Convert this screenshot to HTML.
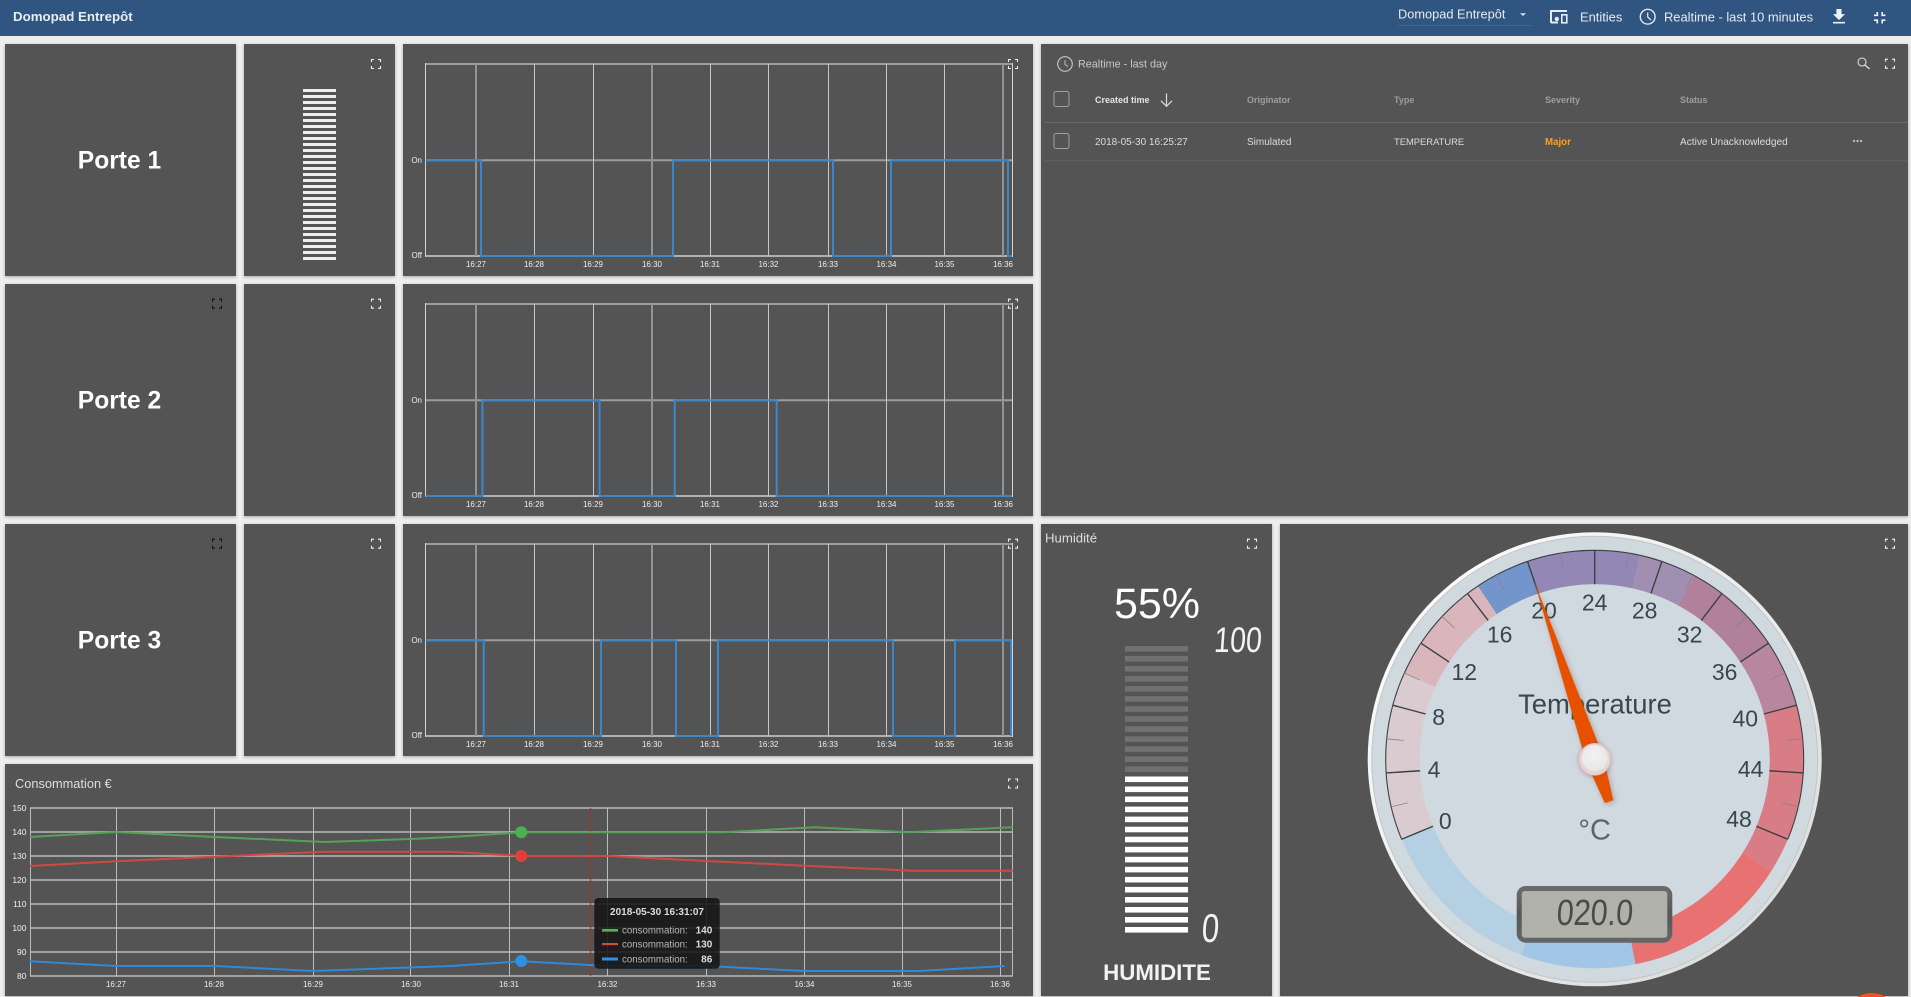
<!DOCTYPE html>
<html lang="fr">
<head>
<meta charset="utf-8">
<title>Domopad Entrepôt</title>
<style>
html,body{margin:0;padding:0;width:1911px;height:997px;overflow:hidden;background:#eeeeee;font-family:"Liberation Sans",sans-serif}
.hd{position:absolute;left:0;top:0;width:1911px;height:36px;background:#2f5580}
.c{position:absolute;background:#535453;box-shadow:0 1px 3px rgba(0,0,0,.3)}
svg{position:absolute;left:0;top:0;display:block;overflow:hidden}
text{font-family:"Liberation Sans",sans-serif}
</style>
</head>
<body>
<div class="hd"></div>
<div class="c" style="left:5px;top:44px;width:231px;height:232px"></div>
<div class="c" style="left:244px;top:44px;width:151px;height:232px"></div>
<div class="c" style="left:403px;top:44px;width:630px;height:232px"></div>
<div class="c" style="left:5px;top:284px;width:231px;height:232px"></div>
<div class="c" style="left:244px;top:284px;width:151px;height:232px"></div>
<div class="c" style="left:403px;top:284px;width:630px;height:232px"></div>
<div class="c" style="left:5px;top:524px;width:231px;height:232px"></div>
<div class="c" style="left:244px;top:524px;width:151px;height:232px"></div>
<div class="c" style="left:403px;top:524px;width:630px;height:232px"></div>
<div class="c" style="left:5px;top:764px;width:1028px;height:232px"></div>
<div class="c" style="left:1041px;top:44px;width:867px;height:472px"></div>
<div class="c" style="left:1041px;top:524px;width:231px;height:472px"></div>
<div class="c" style="left:1280px;top:524px;width:628px;height:472px"></div>

<svg width="1911" height="997" viewBox="0 0 1911 997" xmlns="http://www.w3.org/2000/svg">
<defs>
<path id="ex" d="M-4.5 -2V-4.5H-2M2 -4.5H4.5V-2M4.5 2V4.5H2M-2 4.5H-4.5V2" fill="none" stroke-width="1.1"/>
<g id="grid" fill="none">
<path d="M425 64H1012M425 160.3H1012" stroke="#9c9c9c" stroke-width="2"/>
<path d="M425 256H1012" stroke="#b0b0b0" stroke-width="2"/>
<path d="M425.5 63V257M1012.5 63V257" stroke="#d4d4d4"/>
<path d="M476 64V256M652 64V256M1003 64V256" stroke="#939393" stroke-width="2"/>
<path d="M534.5 64V256M593.5 64V256M710.5 64V256M768.5 64V256M828.5 64V256M886.5 64V256M944.5 64V256" stroke="#c6c6c6"/>
</g>
<g id="bars" fill="#eeeeee" shape-rendering="crispEdges">
<rect x="0" y="0" width="33" height="3"/><rect x="0" y="6" width="33" height="3"/><rect x="0" y="12" width="33" height="3"/><rect x="0" y="18" width="33" height="3"/><rect x="0" y="24" width="33" height="3"/><rect x="0" y="30" width="33" height="3"/><rect x="0" y="36" width="33" height="3"/><rect x="0" y="42" width="33" height="3"/><rect x="0" y="48" width="33" height="3"/><rect x="0" y="54" width="33" height="3"/><rect x="0" y="60" width="33" height="3"/><rect x="0" y="66" width="33" height="3"/><rect x="0" y="72" width="33" height="3"/><rect x="0" y="78" width="33" height="3"/><rect x="0" y="84" width="33" height="3"/><rect x="0" y="90" width="33" height="3"/><rect x="0" y="96" width="33" height="3"/><rect x="0" y="102" width="33" height="3"/><rect x="0" y="108" width="33" height="3"/><rect x="0" y="114" width="33" height="3"/><rect x="0" y="120" width="33" height="3"/><rect x="0" y="126" width="33" height="3"/><rect x="0" y="132" width="33" height="3"/><rect x="0" y="138" width="33" height="3"/><rect x="0" y="144" width="33" height="3"/><rect x="0" y="150" width="33" height="3"/><rect x="0" y="156" width="33" height="3"/><rect x="0" y="162" width="33" height="3"/><rect x="0" y="168" width="33" height="3"/>
</g>
<linearGradient id="lcdb" x1="0" y1="0" x2="0" y2="1"><stop offset="0" stop-color="#6b6b6b"/><stop offset=".5" stop-color="#575757"/><stop offset="1" stop-color="#666"/></linearGradient>
<linearGradient id="rim" x1="0" y1="0" x2="1" y2="1"><stop offset="0" stop-color="#ffffff"/><stop offset="1" stop-color="#d8d8d8"/></linearGradient>
<radialGradient id="hub" cx=".45" cy=".4" r=".65"><stop offset="0" stop-color="#f2f2f2"/><stop offset="1" stop-color="#e6e6e6"/></radialGradient>
</defs>

<!-- HEADER -->
<text x="13" y="21" font-size="13.3" font-weight="700" fill="#e9eef3">Domopad Entrepôt</text>
<text x="1398" y="18.5" font-size="12.8" fill="#e6ebf1">Domopad Entrepôt</text>
<path d="M1398 25.5H1532" stroke="#41648c"/>
<path d="M1520 13.2L1526 13.2L1523 16Z" fill="#dfe5ec"/>
<path d="M1551 23V11H1567" fill="none" stroke="#e6ebf1" stroke-width="2"/>
<path d="M1551 22.5H1558" fill="none" stroke="#e6ebf1" stroke-width="2"/>
<rect x="1561.8" y="14.8" width="5" height="8" fill="none" stroke="#e6ebf1" stroke-width="1.6"/>
<circle cx="1556.8" cy="19" r="2.2" fill="#e6ebf1"/>
<text x="1580" y="21.5" font-size="12.9" fill="#e6ebf1">Entities</text>
<circle cx="1647.7" cy="16.7" r="7.4" fill="none" stroke="#e6ebf1" stroke-width="1.4"/>
<path d="M1647.7 12.5V17L1651 20" fill="none" stroke="#e6ebf1" stroke-width="1.2"/>
<text x="1664" y="21.5" font-size="12.9" fill="#e6ebf1">Realtime - last 10 minutes</text>
<g transform="translate(1828.7 6.4) scale(.857)"><path d="M19 9h-4V3H9v6H5l7 7 7-7zM5 18v2h14v-2H5z" fill="#eef1f5"/></g>
<g transform="translate(1869.9 7.9) scale(.82)"><path d="M5 16h3v3h2v-5H5v2zm3-8H5v2h5V5H8v3zm6 11h2v-3h3v-2h-5v5zm2-11V5h-2v5h5V8h-3z" fill="#eef1f5"/></g>

<!-- PORTE titles -->
<text x="119.5" y="168.5" font-size="24.6" font-weight="700" fill="#ffffff" text-anchor="middle">Porte 1</text>
<text x="119.5" y="408.5" font-size="24.6" font-weight="700" fill="#ffffff" text-anchor="middle">Porte 2</text>
<text x="119.5" y="648.5" font-size="24.6" font-weight="700" fill="#ffffff" text-anchor="middle">Porte 3</text>
<use href="#ex" x="217" y="303.7" stroke="#111"/>
<use href="#ex" x="217" y="543.7" stroke="#111"/>

<!-- bar card 1 -->
<use href="#bars" x="303" y="89"/>
<use href="#ex" x="376" y="64" stroke="#eee"/>
<use href="#ex" x="376" y="303.7" stroke="#eee"/>
<use href="#ex" x="376" y="543.7" stroke="#eee"/>

<!-- CHARTS -->
<use href="#grid"/>
<use href="#grid" y="240"/>
<use href="#grid" y="480"/>

<path d="M425.5 160.3H481V256H673V160.3H833V256H891V160.3H1008V256H1012" fill="none" stroke="#3b87c9" stroke-width="2"/>
<path d="M425.5 496H482.4V400.3H599.6V496H674.7V400.3H776.7V496H1012" fill="none" stroke="#3b87c9" stroke-width="2"/>
<path d="M425.5 640.3H483.7V736H601V640.3H676V736H718V640.3H893V736H955V640.3H1011V736" fill="none" stroke="#3b87c9" stroke-width="2"/>

<g font-size="8" fill="#eeeeee" text-anchor="middle">
<text x="476" y="267">16:27</text><text x="534" y="267">16:28</text><text x="593" y="267">16:29</text><text x="652" y="267">16:30</text><text x="710" y="267">16:31</text><text x="768.5" y="267">16:32</text><text x="828" y="267">16:33</text><text x="886.5" y="267">16:34</text><text x="944.5" y="267">16:35</text><text x="1003" y="267">16:36</text>
<text x="476" y="507">16:27</text><text x="534" y="507">16:28</text><text x="593" y="507">16:29</text><text x="652" y="507">16:30</text><text x="710" y="507">16:31</text><text x="768.5" y="507">16:32</text><text x="828" y="507">16:33</text><text x="886.5" y="507">16:34</text><text x="944.5" y="507">16:35</text><text x="1003" y="507">16:36</text>
<text x="476" y="747">16:27</text><text x="534" y="747">16:28</text><text x="593" y="747">16:29</text><text x="652" y="747">16:30</text><text x="710" y="747">16:31</text><text x="768.5" y="747">16:32</text><text x="828" y="747">16:33</text><text x="886.5" y="747">16:34</text><text x="944.5" y="747">16:35</text><text x="1003" y="747">16:36</text>
</g>
<g font-size="8" fill="#eeeeee" text-anchor="end">
<text x="422" y="163">On</text><text x="422" y="258">Off</text>
<text x="422" y="403">On</text><text x="422" y="498">Off</text>
<text x="422" y="643">On</text><text x="422" y="738">Off</text>
</g>
<use href="#ex" x="1013" y="64" stroke="#eee"/>
<use href="#ex" x="1013" y="303.7" stroke="#eee"/>
<use href="#ex" x="1013" y="543.7" stroke="#eee"/>

<!-- CONSUMPTION -->
<text x="15" y="788" font-size="12.8" fill="#dddddd">Consommation €</text>
<use href="#ex" x="1013" y="783.5" stroke="#eee"/>
<path d="M30 808H1013M30 832H1013M30 856H1013M30 880H1013M30 904H1013M30 928H1013M30 952H1013M30 976H1013" stroke="#a0a0a0" stroke-width="2" fill="none"/>
<path d="M30.5 808V976M1012.5 808V976M116.5 808V976M214.5 808V976M313.5 808V976M410.5 808V976M509.5 808V976M607.5 808V976M706.5 808V976M804.5 808V976M902.5 808V976M1000.5 808V976" stroke="#bcbcbc" fill="none"/>
<path d="M590.5 808V976" stroke="#8e3a38" stroke-width="1.4" fill="none"/>
<polyline points="29.8,837 116,832 214.2,837 325,842 410.6,839 451,837 521.3,832.3 723,832.3 814.5,827.3 908.7,832.3 1012.8,827.3" fill="none" stroke="#55a159" stroke-width="2"/>
<polyline points="29.8,866 116,861.3 214.2,856.7 325,851.7 451,851.7 521.3,856 610.2,856 706.4,861 804.5,865.7 912,870.7 1012.8,870.7" fill="none" stroke="#cf4a44" stroke-width="2"/>
<polyline points="29.8,961.3 116,966 215.6,966 313,971 451,966 521.3,961.3 607.5,966 706.4,966 804.5,971 918.6,971 1004.8,966" fill="none" stroke="#2f8ad8" stroke-width="2"/>
<circle cx="521.3" cy="832.3" r="6" fill="#4caf50"/>
<circle cx="521.3" cy="856" r="6" fill="#e0403a"/>
<circle cx="521.3" cy="961" r="6" fill="#2f8fe0"/>
<g font-size="8" fill="#eeeeee" text-anchor="middle">
<text x="116" y="987">16:27</text><text x="214" y="987">16:28</text><text x="313" y="987">16:29</text><text x="411" y="987">16:30</text><text x="509" y="987">16:31</text><text x="607.5" y="987">16:32</text><text x="706" y="987">16:33</text><text x="804.5" y="987">16:34</text><text x="902" y="987">16:35</text><text x="1000" y="987">16:36</text>
</g>
<g font-size="8.5" fill="#eeeeee" text-anchor="end">
<text x="26.5" y="811">150</text><text x="26.5" y="835">140</text><text x="26.5" y="859">130</text><text x="26.5" y="883">120</text><text x="26.5" y="907">110</text><text x="26.5" y="931">100</text><text x="26.5" y="955">90</text><text x="26.5" y="979">80</text>
</g>
<rect x="594.3" y="898" width="125.4" height="70.7" rx="4" fill="#141414" fill-opacity=".88"/>
<text x="657" y="915" font-size="10" font-weight="700" fill="#dddddd" text-anchor="middle">2018-05-30 16:31:07</text>
<rect x="602" y="929" width="16" height="2.6" fill="#55b15a"/>
<rect x="602" y="943" width="16" height="2.2" fill="#d5483f"/>
<rect x="602" y="957.5" width="16" height="3" fill="#2f90e0"/>
<g font-size="9.7" fill="#b8b8b8">
<text x="622" y="933.5">consommation:</text><text x="622" y="947.5">consommation:</text><text x="622" y="962.5">consommation:</text>
</g>
<g font-size="10" font-weight="700" fill="#dddddd" text-anchor="end">
<text x="712.3" y="933.5">140</text><text x="712.3" y="947.5">130</text><text x="712.3" y="962.5">86</text>
</g>

<!-- ALARM TABLE -->
<circle cx="1065" cy="64" r="7.3" fill="none" stroke="#c8c8c8" stroke-width="1.1"/>
<path d="M1065 60V64.5L1068 66.5" fill="none" stroke="#c8c8c8" stroke-width=".9"/>
<text x="1078" y="67.7" font-size="10.8" fill="#c8c8c8">Realtime - last day</text>
<circle cx="1862" cy="62" r="4" fill="none" stroke="#dddddd" stroke-width="1.1"/>
<path d="M1865 65L1869.5 69" stroke="#dddddd" stroke-width="1.3"/>
<use href="#ex" x="1890" y="63.7" stroke="#eee"/>
<rect x="1054" y="91.5" width="15" height="15" rx="2" fill="none" stroke="#a0a0a0"/>
<rect x="1054" y="133.5" width="15" height="15" rx="2" fill="none" stroke="#a0a0a0"/>
<text x="1095" y="103" font-size="9" font-weight="700" fill="#e4e4e4">Created time</text>
<path d="M1166.5 93.5V106M1161 100.8L1166.5 106.3L1172 100.8" fill="none" stroke="#dddddd" stroke-width="1.2"/>
<g font-size="9" font-weight="700" fill="#9e9e9e">
<text x="1247" y="103">Originator</text><text x="1394" y="103">Type</text><text x="1545" y="103">Severity</text><text x="1680" y="103">Status</text>
</g>
<path d="M1044 122.5H1908" stroke="#696969"/>
<path d="M1044 160.5H1908" stroke="#5e5e5e"/>
<g font-size="10" fill="#dcdcdc">
<text x="1095" y="145">2018-05-30 16:25:27</text>
<text x="1247" y="145">Simulated</text>
<text x="1394" y="145" font-size="9.4">TEMPERATURE</text>
<text x="1680" y="145" font-size="10.1">Active Unacknowledged</text>
</g>
<text x="1545" y="145" font-size="9.7" font-weight="700" fill="#f9a02a">Major</text>
<circle cx="1854" cy="141" r="1.2" fill="#b8b8b8"/><circle cx="1857.5" cy="141" r="1.2" fill="#b8b8b8"/><circle cx="1861" cy="141" r="1.2" fill="#b8b8b8"/>

<!-- HUMIDITY -->
<text x="1045" y="542.5" font-size="13.2" fill="#dddddd">Humidité</text>
<use href="#ex" x="1252" y="543.7" stroke="#eee"/>
<text x="1157" y="618" font-size="43" fill="#ffffff" text-anchor="middle">55%</text>
<g fill="#717171">
<rect x="1125" y="646" width="63" height="5.6"/><rect x="1125" y="656" width="63" height="5.6"/><rect x="1125" y="666" width="63" height="5.6"/><rect x="1125" y="676" width="63" height="5.6"/><rect x="1125" y="686.1" width="63" height="5.6"/><rect x="1125" y="696.1" width="63" height="5.6"/><rect x="1125" y="706.2" width="63" height="5.6"/><rect x="1125" y="716.2" width="63" height="5.6"/><rect x="1125" y="726.3" width="63" height="5.6"/><rect x="1125" y="736.3" width="63" height="5.6"/><rect x="1125" y="746.3" width="63" height="5.6"/><rect x="1125" y="756.4" width="63" height="5.6"/><rect x="1125" y="766.4" width="63" height="5.6"/>
</g>
<g fill="#ffffff">
<rect x="1125" y="776.5" width="63" height="5.6"/><rect x="1125" y="786.5" width="63" height="5.6"/><rect x="1125" y="796.5" width="63" height="5.6"/><rect x="1125" y="806.6" width="63" height="5.6"/><rect x="1125" y="816.6" width="63" height="5.6"/><rect x="1125" y="826.7" width="63" height="5.6"/><rect x="1125" y="836.7" width="63" height="5.6"/><rect x="1125" y="846.8" width="63" height="5.6"/><rect x="1125" y="856.8" width="63" height="5.6"/><rect x="1125" y="866.8" width="63" height="5.6"/><rect x="1125" y="876.9" width="63" height="5.6"/><rect x="1125" y="886.9" width="63" height="5.6"/><rect x="1125" y="897" width="63" height="5.6"/><rect x="1125" y="907" width="63" height="5.6"/><rect x="1125" y="917" width="63" height="5.6"/><rect x="1125" y="927" width="63" height="5.6"/>
</g>
<text transform="translate(1213.5 652) skewX(-4) scale(1 1.25)" font-size="28.5" fill="#f4f4f4">100</text>
<text transform="translate(1201 942) skewX(-4) scale(1 1.3)" font-size="31" fill="#f4f4f4">0</text>
<text x="1157" y="980" font-size="22.3" font-weight="700" fill="#f2f2f2" text-anchor="middle">HUMIDITE</text>

<!-- GAUGE -->
<use href="#ex" x="1890" y="543.7" stroke="#eee"/>
<g transform="translate(1594.7 759.3)">
<circle r="227" fill="url(#rim)"/>
<circle r="223.5" fill="#bfc6ca"/>
<circle r="222.5" fill="#d0d9dd"/>
<g fill="none" stroke-width="34">
<circle r="192" pathLength="360" stroke-dasharray="46.9 360" stroke="#d9cbd0" transform="rotate(-202.5)"/>
<circle r="192" pathLength="360" stroke-dasharray="31.6 360" stroke="#d9b6bb" transform="rotate(-155.6)"/>
<circle r="192" pathLength="360" stroke-dasharray="15.25 360" stroke="#7494cc" transform="rotate(-124)"/>
<circle r="192" pathLength="360" stroke-dasharray="31.35 360" stroke="#9388b5" transform="rotate(-108.75)"/>
<circle r="192" pathLength="360" stroke-dasharray="15.8 360" stroke="#a18fb2" transform="rotate(-77.4)"/>
<circle r="192" pathLength="360" stroke-dasharray="28.4 360" stroke="#b0809c" transform="rotate(-61.6)"/>
<circle r="192" pathLength="360" stroke-dasharray="18.2 360" stroke="#b986a0" transform="rotate(-33.2)"/>
<circle r="192" pathLength="360" stroke-dasharray="47.3 360" stroke="#d87c86" transform="rotate(-15)"/>
<circle r="192" pathLength="360" stroke-dasharray="46.45 360" stroke="#e87272" transform="rotate(32.3)"/>
<circle r="192" pathLength="360" stroke-dasharray="31.85 360" stroke="#a2c7e6" transform="rotate(78.75)"/>
<circle r="192" pathLength="360" stroke-dasharray="46.9 360" stroke="#b5d0e3" transform="rotate(110.6)"/>
</g>
<circle r="175" fill="#d0d9e0"/>
<circle r="209" pathLength="360" fill="none" stroke="#3c4044" stroke-width="1.1" stroke-dasharray="225 360" transform="rotate(-202.5)"/>
<g stroke="#3c4044" stroke-width="1.4">
<line y1="-209" y2="-175" transform="rotate(-112.5)"/><line y1="-209" y2="-175" transform="rotate(-93.75)"/><line y1="-209" y2="-175" transform="rotate(-75)"/><line y1="-209" y2="-175" transform="rotate(-56.25)"/><line y1="-209" y2="-175" transform="rotate(-37.5)"/><line y1="-209" y2="-175" transform="rotate(-18.75)"/><line y1="-209" y2="-175"/><line y1="-209" y2="-175" transform="rotate(18.75)"/><line y1="-209" y2="-175" transform="rotate(37.5)"/><line y1="-209" y2="-175" transform="rotate(56.25)"/><line y1="-209" y2="-175" transform="rotate(75)"/><line y1="-209" y2="-175" transform="rotate(93.75)"/><line y1="-209" y2="-175" transform="rotate(112.5)"/>
</g>
<g stroke="#85858a" stroke-width=".8">
<line y1="-209" y2="-192" transform="rotate(-103.125)"/><line y1="-209" y2="-192" transform="rotate(-84.375)"/><line y1="-209" y2="-192" transform="rotate(-65.625)"/><line y1="-209" y2="-192" transform="rotate(-46.875)"/><line y1="-209" y2="-192" transform="rotate(-28.125)"/><line y1="-209" y2="-192" transform="rotate(-9.375)"/><line y1="-209" y2="-192" transform="rotate(9.375)"/><line y1="-209" y2="-192" transform="rotate(28.125)"/><line y1="-209" y2="-192" transform="rotate(46.875)"/><line y1="-209" y2="-192" transform="rotate(65.625)"/><line y1="-209" y2="-192" transform="rotate(84.375)"/><line y1="-209" y2="-192" transform="rotate(103.125)"/>
</g>
</g>
<g font-size="23" fill="#37474f" text-anchor="middle">
<text x="1445.3" y="829">0</text><text x="1434" y="777.5">4</text><text x="1438.7" y="725">8</text><text x="1464.3" y="680">12</text><text x="1499.7" y="642.5">16</text><text x="1544" y="618.5">20</text><text x="1594.7" y="610.5">24</text><text x="1644.7" y="618.5">28</text><text x="1689.7" y="642.5">32</text><text x="1724.7" y="680">36</text><text x="1745.3" y="726.5">40</text><text x="1750.7" y="777">44</text><text x="1739" y="827">48</text>
</g>
<text x="1595" y="713.3" font-size="27.4" fill="#37474f" text-anchor="middle">Temperature</text>
<text x="1594.7" y="839.3" font-size="29" fill="#566670" text-anchor="middle">°C</text>
<rect x="1516.7" y="886" width="155.6" height="56.7" rx="9" fill="url(#lcdb)"/>
<rect x="1521.7" y="891" width="145.6" height="46.7" rx="3" fill="#b0b1a9"/>
<text transform="translate(1556 925) skewX(-4) scale(1 1.2)" font-size="30.5" fill="#4a4a4a">020.0</text>
<g transform="translate(1594.7 759.3) rotate(-18.75)" style="filter:drop-shadow(1px 2px 3px rgba(120,60,40,.35))">
<polygon points="0,-188 9,0 4.5,44.7 -4.5,44.7 -9,0" fill="#e65100"/>
</g>
<circle cx="1594.7" cy="759.3" r="15.8" fill="#e7d5d5" stroke="#dcc2c2" style="filter:drop-shadow(0 1px 2px rgba(140,70,60,.4))"/>
<circle cx="1594.7" cy="758" r="13" fill="url(#hub)"/>

<!-- FAB -->
<path d="M1857.3 997A28 28 0 0 1 1886.1 997Z" fill="#f4511e"/>
</svg>
</body>
</html>
